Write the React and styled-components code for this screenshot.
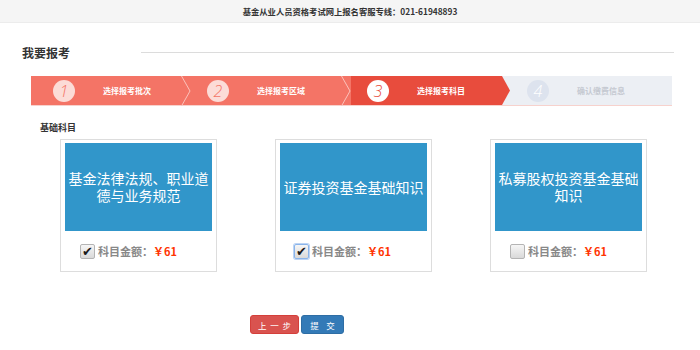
import React from 'react';
import styled, { createGlobalStyle } from 'styled-components';

const GlobalStyle = createGlobalStyle`
  body {
    margin: 0;
    background: #ffffff;
    font-family: "Noto Sans CJK SC", "Noto Sans", sans-serif;
  }
`;

const Header = styled.div`
  height: 22px;
  line-height: 22px;
  background: #f5f5f5;
  border-bottom: 1px solid #ececec;
  text-align: center;
  font-size: 8.3px;
  font-weight: bold;
  color: #333;
`;

const Main = styled.div`
  padding: 0 26px 0 22px;
`;

const TitleRow = styled.div`
  display: flex;
  align-items: center;
  margin-top: 22px;
  height: 14px;
`;

const Title = styled.div`
  width: 119px;
  font-size: 12px;
  font-weight: bold;
  color: #333;
`;

const TitleLine = styled.div`
  flex: 1;
  height: 1px;
  background: #dcdcdc;
`;

const Steps = styled.div`
  display: flex;
  width: 641px;
  height: 30px;
  margin: 17px 0 0 9px;
  background: #eceff4;
  border-bottom: 1px solid #f7d2cd;
  box-sizing: border-box;
`;

const stepBg = {
  done: '#f47466',
  current: '#e84c3d',
  todo: 'transparent',
};

const Step = styled.div`
  position: relative;
  width: 160px;
  display: flex;
  align-items: center;
  padding-left: ${p => (p.first ? 22 : 16)}px;
  box-sizing: border-box;
  background: ${p => stepBg[p.state]};
  clip-path: ${p => (p.state === 'current'
    ? 'polygon(0 0, 151px 0, 159px 50%, 151px 100%, 0 100%)'
    : 'none')};
`;

const Circle = styled.div`
  width: 22px;
  height: 22px;
  border-radius: 50%;
  display: flex;
  align-items: center;
  justify-content: center;
  font-family: "Open Sans", sans-serif;
  font-style: italic;
  font-weight: 300;
  font-size: 16px;
  background: ${p => (p.state === 'done' ? '#fcdcd7' : p.state === 'current' ? '#ffffff' : '#dde3ee')};
  color: ${p => (p.state === 'done' ? '#f47466' : p.state === 'current' ? '#e84c3d' : '#ffffff')};
`;

const StepText = styled.div`
  flex: 1;
  text-align: center;
  padding-right: ${p => (p.first ? 12 : 18)}px;
  font-size: 8px;
  font-weight: bold;
  color: ${p => (p.state === 'todo' ? '#c5c9d1' : '#ffffff')};
`;

const Chevron = styled.svg`
  position: absolute;
  right: 0;
  top: 0;
`;

const SubTitle = styled.div`
  margin: 16px 0 0 18px;
  font-size: 9px;
  font-weight: bold;
  color: #333;
  line-height: 12px;
`;

const Cards = styled.div`
  display: flex;
  gap: 58px;
  margin-top: 5px;
  padding-left: 38px;
`;

const Card = styled.div`
  width: 157px;
  height: 133px;
  box-sizing: border-box;
  border: 1px solid #dddddd;
  padding: 3px 4px;
`;

const Cover = styled.div`
  height: 88px;
  background: #3196ca;
  display: flex;
  align-items: center;
  justify-content: center;
  text-align: center;
  padding: 0;
  color: #ffffff;
  font-size: 14px;
  line-height: 17px;
`;

const Fee = styled.div`
  display: flex;
  align-items: center;
  margin: 12px 0 0 ${p => p.indent}px;
`;

const Box = styled.span`
  width: 15px;
  height: 15px;
  box-sizing: border-box;
  border: 1px solid ${p => (p.focus ? '#8ab4ea' : '#b4b4b4')};
  border-radius: 2px;
  background: linear-gradient(#f6f6f6, #d9d9d9);
  box-shadow: ${p => (p.focus ? '0 0 0 1px #bcd4f4' : 'none')};
  display: flex;
  align-items: center;
  justify-content: center;
  font-size: 13px;
  line-height: 1;
  color: #1a1a1a;
  font-family: "DejaVu Sans", sans-serif;
`;

const FeeLabel = styled.span`
  margin-left: 3px;
  font-size: 11px;
  font-weight: bold;
  color: #888;
`;

const Price = styled.span`
  font-size: 11px;
  font-weight: bold;
  color: #ff3300;
`;

const Actions = styled.div`
  display: flex;
  gap: 2px;
  margin: 43px 0 0 228px;
`;

const Button = styled.button`
  height: 19px;
  width: ${p => p.w}px;
  border: 1px solid ${p => (p.kind === 'danger' ? '#d43f3a' : '#2e6da4')};
  border-radius: 3px;
  background: ${p => (p.kind === 'danger' ? '#d9534f' : '#337ab7')};
  color: #fff;
  font-family: "Noto Sans CJK SC", sans-serif;
  font-size: 8.5px;
  padding: 0;
  white-space: pre;
`;

const steps = [
  { n: 1, text: '选择报考批次', state: 'done' },
  { n: 2, text: '选择报考区域', state: 'done' },
  { n: 3, text: '选择报考科目', state: 'current' },
  { n: 4, text: '确认缴费信息', state: 'todo' },
];

const subjects = [
  { title: '基金法律法规、职业道德与业务规范', checked: true, indent: 15 },
  { title: '证券投资基金基础知识', checked: true, focus: true, indent: 14 },
  { title: '私募股权投资基金基础知识', checked: false, indent: 15 },
];

export default function App() {
  return (
    <>
      <GlobalStyle />
      <Header>基金从业人员资格考试网上报名客服专线：021-61948893</Header>
      <Main>
        <TitleRow>
          <Title>我要报考</Title>
          <TitleLine />
        </TitleRow>

        <Steps>
          {steps.map((s, i) => (
            <Step key={s.n} state={s.state} first={i === 0}>
              <Circle state={s.state}>{s.n}</Circle>
              <StepText state={s.state} first={i === 0}>{s.text}</StepText>
              {s.state === 'done' && (
                <Chevron width="10" height="30" viewBox="0 0 10 30">
                  <polyline points="0.5,0 9,15 0.5,30" fill="none" stroke="#fbc2bb" strokeWidth="1" />
                </Chevron>
              )}
            </Step>
          ))}
        </Steps>

        <SubTitle>基础科目</SubTitle>

        <Cards>
          {subjects.map(s => (
            <Card key={s.title}>
              <Cover>{s.title}</Cover>
              <Fee indent={s.indent}>
                <Box focus={s.focus}>{s.checked ? '✔' : ''}</Box>
                <FeeLabel>科目金额：</FeeLabel>
                <Price>￥61</Price>
              </Fee>
            </Card>
          ))}
        </Cards>

        <Actions>
          <Button kind="danger" w={49}>{'上  一  步'}</Button>
          <Button kind="primary" w={43}>{'提    交'}</Button>
        </Actions>
      </Main>
    </>
  );
}
